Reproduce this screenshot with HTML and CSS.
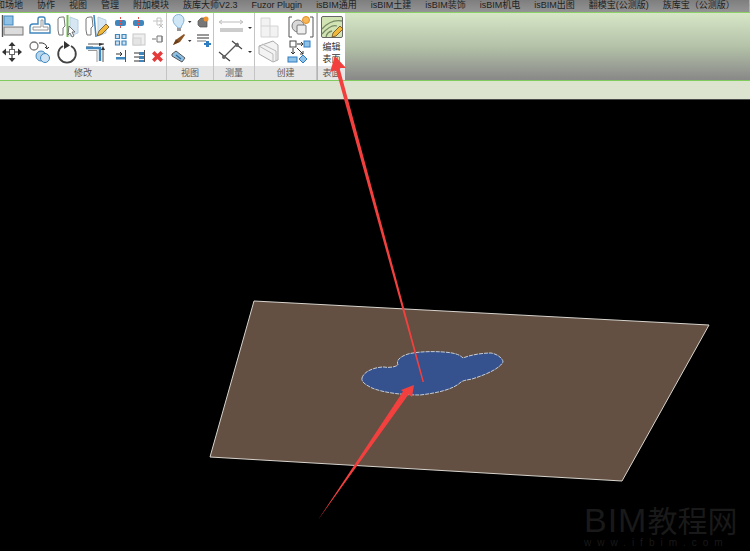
FILE: index.html
```html
<!DOCTYPE html>
<html lang="zh">
<head>
<meta charset="utf-8">
<title>Revit</title>
<link rel="stylesheet" href="styles.css">
</head>
<body>
<div class="app">
  <nav class="tabs">
    <span class="tab tab-first">体量和场地</span>
    <span class="tab">协作</span>
    <span class="tab">视图</span>
    <span class="tab">管理</span>
    <span class="tab">附加模块</span>
    <span class="tab">族库大师V2.3</span>
    <span class="tab">Fuzor Plugin</span>
    <span class="tab">isBIM通用</span>
    <span class="tab">isBIM土建</span>
    <span class="tab">isBIM装饰</span>
    <span class="tab">isBIM机电</span>
    <span class="tab">isBIM出图</span>
    <span class="tab">翻模宝(公测版)</span>
    <span class="tab">族库宝（公测版）</span>
    <span class="tab tab-active">修改</span>
  </nav>

  <section class="ribbon">
    <div class="panel p-modify">
      <svg class="panel-icons" width="166" height="54" viewBox="0 12 166 54">
        <!-- align -->
        <path d="M2.5 15v22" stroke="#555" stroke-width="1.4"/>
        <rect x="4" y="16" width="9" height="9" fill="#8fc2e6" stroke="#3f86bd"/>
        <rect x="4" y="27" width="19" height="8" fill="#dcdcdc" stroke="#777"/>
        <!-- offset -->
        <path d="M30 33v-6q0-3 3-3h5v-5q0-2 2-2h3q2 0 2 2v5h3q2 0 2 3v6z" fill="#fff" stroke="#3f86bd" stroke-width="1.4"/>
        <path d="M33 30v-3h8v-7h2v7h5v3z" fill="#fff" stroke="#8a8a8a" stroke-width=".9"/>
        <!-- mirror pick -->
        <path d="M58 19q0-2 4-2h2l1 9-2 2v7h-4l-1-5z" fill="#fff" stroke="#777"/>
        <path d="M70 17l8 3v13l-8 3z" fill="#d6e6f2" stroke="#b5cfe2"/>
        <path d="M67.500 15v22" stroke="#6fbf4e" stroke-width="2"/>
        <path d="M69 26l6 6h-3l2 4-2 1-2-4-2 2z" fill="#fff" stroke="#555" stroke-width=".8"/>
        <!-- mirror draw -->
        <path d="M86 19q0-2 4-2h2l1 9-2 2v7h-4l-1-5z" fill="#fff" stroke="#777"/>
        <path d="M98 17l8 3v13l-8 3z" fill="#d6e6f2" stroke="#b5cfe2"/>
        <path d="M94 15l2 22" stroke="#3f86bd" stroke-width="1.500"/>
        <path d="M97 36l2-5 7-7 3 3-7 7z" fill="#f0b93c" stroke="#6b4a1c" stroke-width=".8"/>
        <!-- split / small column 1 -->
        <rect x="115" y="20" width="11" height="6" rx="2" fill="#3f86bd"/>
        <path d="M120.500 17v12" stroke="#e05050" stroke-dasharray="2 1"/>
        <rect x="133" y="20" width="11" height="6" rx="2" fill="#3f86bd"/>
        <path d="M138.500 17v12" stroke="#e05050" stroke-dasharray="2 1"/>
        <path d="M153 21h10M157 18h4v7h-4z" fill="none" stroke="#c4c4c4"/>
        <path d="M159 24l4 4m0-4l-4 4" stroke="#c4c4c4"/>
        <!-- small column 2 -->
        <path d="M115.500 34.500h4v4h-4zM122 34.500h4v4h-4zM115.500 41h4v4h-4zM122 41h4v4h-4z" fill="#d2e4f2" stroke="#3f86bd" stroke-width="1.200"/>
        <rect x="133" y="34" width="12" height="11" fill="#efefef" stroke="#c8c8c8"/>
        <rect x="133" y="38" width="8" height="7" fill="#e4e4e4" stroke="#d2d2d2"/>
        <path d="M152 39h4M157 36h5v6h-5zM162 36v6" fill="#f4f4f4" stroke="#777"/>
        <!-- small column 3 -->
        <path d="M116 54h6l-2-2m2 2l-2 2" fill="none" stroke="#333"/>
        <rect x="116" y="57" width="9" height="2.500" fill="#3f86bd"/>
        <path d="M125.500 50v12" stroke="#555"/>
        <path d="M134 53h6M134 57h6M134 61h6" stroke="#333"/>
        <path d="M139 52h5v3h-5zM139 56h5v3h-5zM139 60h5v2h-5z" fill="#3f86bd"/>
        <path d="M144.500 50v12" stroke="#555"/>
        <path d="M154 52l3 3 3-3 2.500 2.500-3 3 3 3-2.500 2.500-3-3-3 3-2.500-2.500 3-3-3-3z" transform="translate(.5 -1)" fill="#e63a3a"/>
        <!-- move -->
        <path d="M12 42l3.500 4h-7zM12 62l3.500-4h-7zM2 52l4 3.500v-7zM22 52l-4 3.500v-7z" fill="#333"/>
        <path d="M12 46v12M6 52h12" stroke="#333" stroke-width="1.200"/>
        <rect x="9.500" y="49.500" width="5" height="5" fill="#fff" stroke="#666"/>
        <!-- copy -->
        <circle cx="34" cy="46" r="4" fill="#fff" stroke="#777" stroke-width="1.300"/>
        <path d="M39 43q7-1 8 5m-2-1l2 2 2-2" fill="none" stroke="#333"/>
        <circle cx="41" cy="56" r="5" fill="#b5d5ec" stroke="#3f86bd"/>
        <circle cx="45" cy="58" r="4.500" fill="#cfe3f3" stroke="#3f86bd"/>
        <!-- rotate -->
        <path d="M63 46a8.800 8.800 0 1 0 8 0" fill="none" stroke="#444" stroke-width="1.800"/>
        <path d="M64 41l6 4.500-6 3.500z" fill="#333"/>
        <!-- trim -->
        <path d="M86 47h7M88 44h16" stroke="#555"/>
        <path d="M99 43l5 1-5 2z" fill="#333"/>
        <path d="M86 48h14v13" fill="none" stroke="#3f86bd" stroke-width="2.400"/>
        <path d="M103 62V48" stroke="#555"/>
        <path d="M101 50l2-4 2 4z" fill="#333"/>
        <path d="M88 50.500h9V62" fill="none" stroke="#999"/>
      </svg>
      <div class="panel-title">修改</div>
    </div>

    <div class="panel p-view">
      <svg class="panel-icons" width="45" height="54" viewBox="168 12 45 54">
        <path d="M179 28c-2-3-5-4-5-8a5 5 0 0 1 11 0c0 4-3 5-3 8z" fill="#cfe6f6" stroke="#7fb2d8"/>
        <rect x="178" y="28" width="4" height="3" fill="#999"/>
        <path d="M189 21h3.500l-1.750 2z" fill="#333"/>
        <path d="M199 21l3-3h6v9h-7l-2-2z" fill="#777" stroke="#555" stroke-width=".7"/>
        <circle cx="207" cy="19" r="2.500" fill="#ef8f2b"/>
        <path d="M174 45l4-6 7-5 1 1-5 7z" fill="#8a5424"/>
        <path d="M174 45l3-6 3 3z" fill="#6a3c17"/>
        <path d="M189 40h3.500l-1.750 2z" fill="#333"/>
        <path d="M198 35h12M198 38h12" stroke="#333"/>
        <path d="M198 41h9" stroke="#777"/>
        <path d="M207 41h3v2h2v2h-2v2h-3v-2h-2v-2h2z" fill="#2f7dc0"/>
        <path d="M173 54l4-3 9 7-3 4-10-6z" fill="#8fc0e0" stroke="#555"/>
        <path d="M177 55l5 4" stroke="#2f6ca0" stroke-width="1.500"/>
      </svg>
      <div class="panel-title">视图</div>
    </div>

    <div class="panel p-measure">
      <svg class="panel-icons" width="40" height="54" viewBox="214 12 40 54">
        <path d="M220 22h22M222 20l-3 2 3 2M240 20l3 2-3 2" fill="none" stroke="#bbb"/>
        <rect x="220" y="28" width="23" height="4" fill="#ccc"/>
        <path d="M248 27h4l-2 2z" fill="#333"/>
        <path d="M223 58l15-15" stroke="#555" stroke-width="1.300"/>
        <path d="M219 52l11 9M232 41l10 8" stroke="#444" stroke-width="1.200"/>
        <circle cx="224" cy="57" r="2" fill="#666"/>
        <circle cx="237" cy="45" r="2" fill="#666"/>
        <path d="M248 51h4l-2 2z" fill="#333"/>
      </svg>
      <div class="panel-title">测量</div>
    </div>

    <div class="panel p-create">
      <svg class="panel-icons" width="60" height="54" viewBox="255 12 60 54">
        <path d="M261 18h9v8h8v11h-17z" fill="#f2f2f2" stroke="#d4d4d4"/>
        <path d="M270 26v11M261 26h9" stroke="#d4d4d4"/>
        <path d="M292 17h-3v20h3M310 17h3v20h-3" fill="none" stroke="#555"/>
        <circle cx="298" cy="26" r="6" fill="#d8d8d8" stroke="#777"/>
        <rect x="297" y="25" width="9" height="9" rx="1" fill="#eee" stroke="#777"/>
        <circle cx="306" cy="20" r="3.500" fill="#f6b85a" stroke="#e58a1c"/>
        <path d="M259 46l14-5 5 4v15l-5 2-14-8z" fill="#f3f3f3" stroke="#aaa"/>
        <path d="M262 44l14 7v10M259 46l14 8v8" fill="none" stroke="#bbb"/>
        <rect x="290" y="41" width="6" height="6" fill="#fff" stroke="#444"/>
        <path d="M297 44h6m-2-2l2 2-2 2" fill="none" stroke="#333"/>
        <rect x="304" y="41" width="6" height="6" fill="#8fc2e6" stroke="#2f7dc0"/>
        <path d="M293 48v6m-2-2l2 2 2-2" fill="none" stroke="#333"/>
        <path d="M297 48l6 6m-3 0h3v-3" fill="none" stroke="#333"/>
        <rect x="288" y="57" width="9" height="5" fill="#8fc2e6" stroke="#2f7dc0"/>
        <path d="M303 55l4 4-4 4-4-4z" fill="#8fc2e6" stroke="#2f7dc0"/>
      </svg>
      <div class="panel-title">创建</div>
    </div>

    <div class="panel p-surface">
      <div class="surface-btn">
        <svg class="surface-icon" width="22" height="22" viewBox="0 0 22 22">
          <rect x=".5" y=".5" width="21" height="21" rx="1.500" fill="#d3e4b4" stroke="#666"/>
          <path d="M1 13Q10 3 21 5M1 18Q10 8 16 10M5 21q1-5 6-6" fill="none" stroke="#778a64" stroke-width="1.300"/>
          <path d="M11 21l1-4 7-7 3 3-7 7z" fill="#f0b93c" stroke="#6b4a1c" stroke-width=".8"/>
        </svg>
        <span class="surface-label">编辑<br>表面</span>
      </div>
      <div class="panel-title">表面</div>
    </div>

    <div class="ribbon-fill"></div>
  </section>

  <div class="options"></div>

  <main class="canvas">
    <svg class="scene" width="750" height="452" viewBox="0 99 750 452">
      <polygon points="254,300 709,324 622,480 210,456" fill="#635042" stroke="#d8d4ce" stroke-width="1"/>
      <path d="M362 377C364 370 375 366 384 366C389 367 395 366 398 364C396 360 399 356 408 353C420 350 440 350 452 352C458 353 461 355 463 357C470 354 482 352 491 352C498 353 503 358 503 361C500 367 488 373 472 378C468 379 464 379 461 381C454 388 438 392 420 394C404 394 384 392 372 387C366 384 361 381 362 377Z" fill="#35528f" stroke="#c6ccd6" stroke-width="1" stroke-dasharray="4 1"/>
    </svg>
    <div class="watermark">
      <div class="wm-title"><span class="wm-latin">BIM</span>教程网</div>
      <div class="wm-url">www.ifbim.com</div>
    </div>
  </main>

  <svg class="arrows" width="750" height="551" viewBox="0 0 750 551">
    <path d="M335 56L346 68L339.500 68L424 382L422.500 382L336 70L330 72Z" fill="#f2403f"/>
    <path d="M414 385L412 397L408.500 394.500L318 520L403 391.500L401 390Z" fill="#f2403f"/>
  </svg>
</div>
</body>
</html>
```

FILE: styles.css
```css
* { box-sizing: border-box; }
html, body { margin: 0; padding: 0; background: #000; }
.app {
  position: relative;
  width: 750px;
  height: 551px;
  overflow: hidden;
  display: flex;
  flex-direction: column;
  font-family: "Liberation Sans", "Noto Sans CJK SC", sans-serif;
}
.tabs {
  flex: 0 0 12px;
  display: flex;
  gap: 14px;
  overflow: hidden;
  background: linear-gradient(#7e7e7e, #949494);
  color: #1e1e1e;
  font-size: 9px;
  line-height: 11px;
  white-space: nowrap;
}
.tab { flex: none; }
.tab-first { margin-left: -22px; }
.tab-active {
  width: 20px;
  background: #dbe8cd;
  border: 1px solid #8cd068;
  border-bottom: 0;
}
.ribbon {
  flex: 0 0 68px;
  display: flex;
  border-top: 1px solid #8cd068;
  border-bottom: 1px solid #7fcc5c;
}
.panel {
  flex: none;
  display: flex;
  flex-direction: column;
  justify-content: space-between;
  background: #fff;
  border-right: 1px solid #c4c4c4;
}
.panel-icons { display: block; filter: blur(.35px); margin-top: -1px; }
.panel-title {
  height: 14px;
  background: #e6e6e6;
  color: #5a5a5a;
  font-size: 9px;
  line-height: 14px;
  text-align: center;
}
.p-modify { width: 167px; }
.p-view { width: 47px; }
.p-measure { width: 41px; }
.p-create { width: 62px; }
.p-surface { width: 28px; border-right: 0; border-left: 1px solid #b4b4b4; }
.surface-btn {
  display: flex;
  flex-direction: column;
  align-items: center;
  padding-top: 3px;
}
.surface-icon { display: block; filter: blur(.35px); }
.surface-label {
  margin-top: 3px;
  color: #333;
  font-size: 9px;
  line-height: 12px;
  text-align: center;
}
.ribbon-fill {
  flex: 1;
  background: linear-gradient(#d6e6c6, #b4c2a8 50%, #888);
}
.options {
  flex: 0 0 19px;
  background: #dce4cf;
  border-bottom: 1px solid #4a4a4a;
}
.canvas { flex: 1; position: relative; background: #000; }
.scene { display: block; }
.watermark {
  position: absolute;
  left: 584px;
  top: 402px;
  width: 165px;
  color: #191919;
  font-family: "Noto Sans CJK SC", sans-serif;
}
.wm-title { height: 35px; font-size: 30px; line-height: 34px; white-space: nowrap; }
.wm-latin {
  font-family: "Liberation Sans", sans-serif;
  font-size: 34px;
  line-height: 34px;
  letter-spacing: 1px;
}
.wm-url {
  font-family: "Liberation Sans", sans-serif;
  font-size: 10px;
  line-height: 12px;
  letter-spacing: 6px;
  white-space: nowrap;
}
.arrows { position: absolute; left: 0; top: 0; pointer-events: none; }
```
